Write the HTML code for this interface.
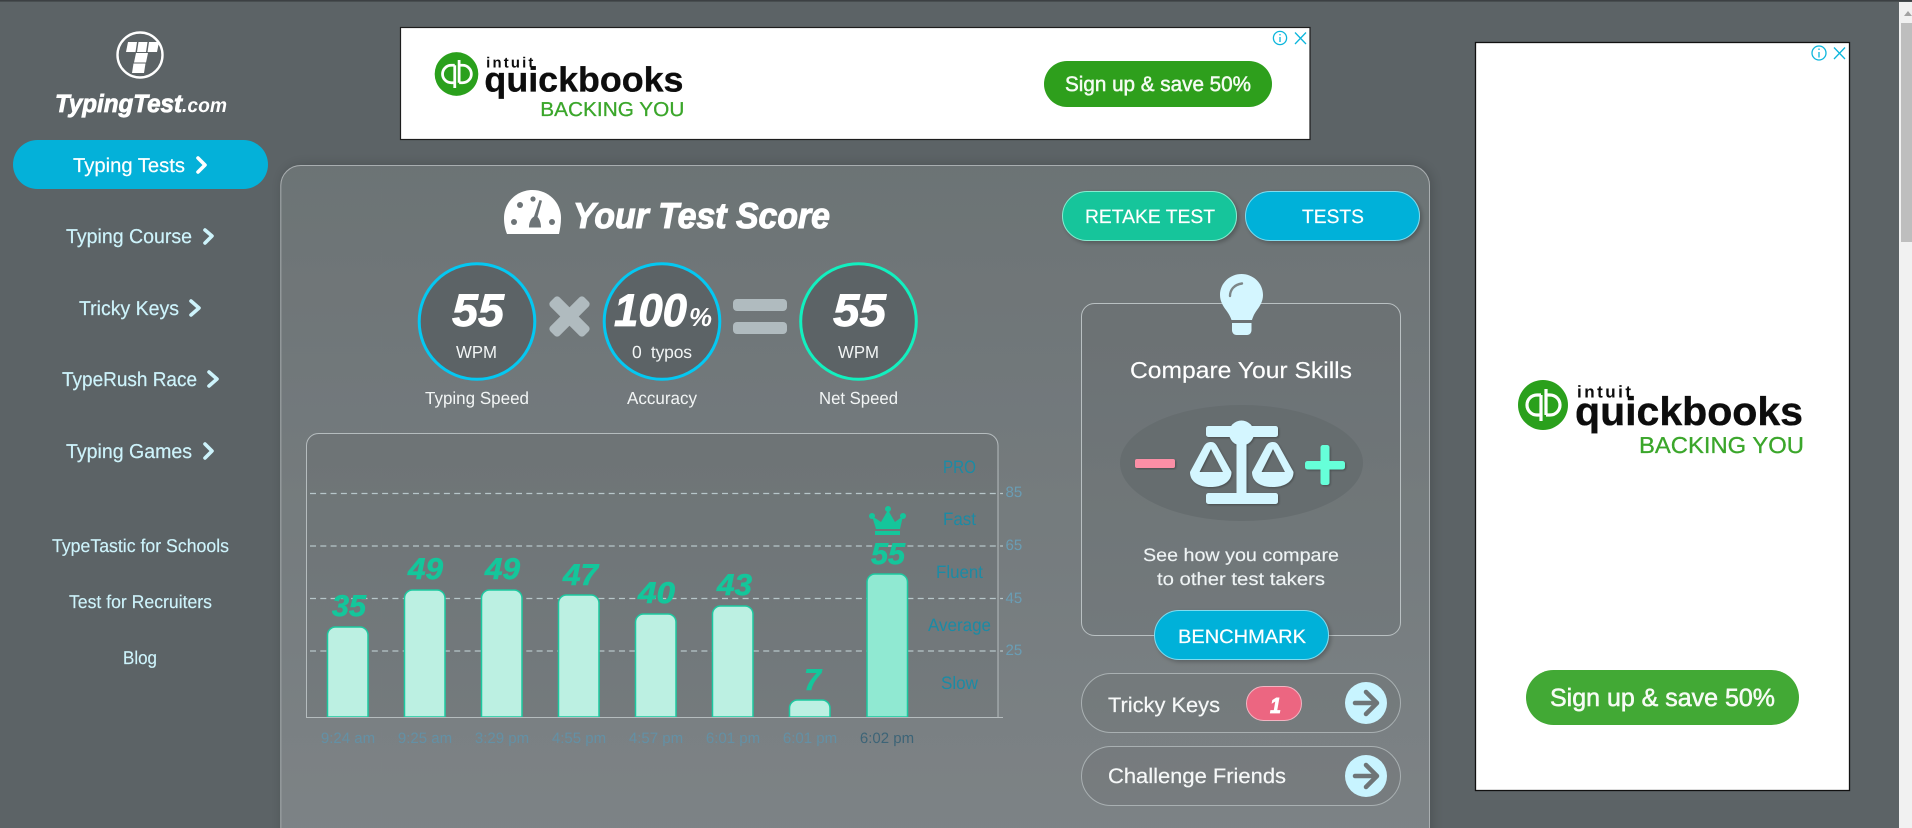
<!DOCTYPE html>
<html lang="en">
<head>
<meta charset="utf-8">
<title>Your Test Score - TypingTest.com</title>
<style>
html,body{margin:0;padding:0;width:1912px;height:828px;overflow:hidden;background:#5c6366}
svg{display:block}
text{font-family:"Liberation Sans",sans-serif;text-rendering:geometricPrecision}
.b{font-weight:700}
.bi{font-weight:700;font-style:italic}
.h{stroke:#fff;stroke-width:.8}
.nav{font-size:20px;fill:#cdf3fb;stroke:#cdf3fb;stroke-width:.2}
.sub{font-size:18.5px;fill:#cdf3fb;stroke:#cdf3fb;stroke-width:.15}
.lbl{font-size:17.5px;fill:#f2f5f5}
.num{font-size:30px;font-weight:700;font-style:italic;fill:#14c69b;stroke:#14c69b;stroke-width:.6}
.time{font-size:15px;fill:#6390a5;text-anchor:middle}
.lvl{font-size:18px;fill:#1b8ba5}
.tick{font-size:15px;fill:#6a9db4}
.btn{font-size:19.5px;fill:#fff;stroke:#fff;stroke-width:.2}
.chev{fill:none;stroke-width:3.6;stroke-linecap:round;stroke-linejoin:round}
</style>
</head>
<body>
<svg width="1912" height="828" viewBox="0 0 1912 828" xmlns="http://www.w3.org/2000/svg">
<defs>
<linearGradient id="pg" x1="0" y1="0" x2="0" y2="1"><stop offset="0" stop-color="#6c7375"/><stop offset="1" stop-color="#7f8588"/></linearGradient>
<filter id="ps" x="-5%" y="-5%" width="110%" height="110%"><feDropShadow dx="2" dy="0" stdDeviation="6" flood-color="#000" flood-opacity=".18"/></filter>
<filter id="bs" x="-15%" y="-25%" width="130%" height="160%"><feDropShadow dx="2" dy="2" stdDeviation="2" flood-color="#000" flood-opacity=".25"/></filter>
<filter id="is" x="-20%" y="-20%" width="140%" height="140%"><feDropShadow dx="1" dy="1" stdDeviation="1" flood-color="#000" flood-opacity=".3"/></filter>
<filter id="soft"><feGaussianBlur stdDeviation=".35"/></filter>
</defs>

<rect width="1912" height="828" fill="#5c6366"/>
<rect width="1912" height="1.6" fill="#3c4043"/>

<!-- Scrollbar -->
<rect x="1899" y="2" width="13" height="826" fill="#f1f1f1"/>
<rect x="1901" y="23" width="11" height="219" fill="#bebebe"/>
<path d="M1908,11 L1912,16 H1904 Z" fill="#a3a3a3"/>

<!-- Logo -->
<circle cx="140" cy="55" r="22.5" fill="none" stroke="#fff" stroke-width="2.4"/>
<g fill="#fff">
<path d="M128,42H137L135.5,52H126Z"/><path d="M138.5,42H147.5L146,52H137Z"/><path d="M149,42H159L157,52H147.5Z"/>
<path d="M136,53H148L146,62.5H134Z"/><path d="M133.5,63.5H145.5L144,73H132Z"/>
</g>
<text x="55" y="112" class="bi h" font-size="25" fill="#fff" textLength="127" lengthAdjust="spacingAndGlyphs">TypingTest</text>
<text x="182" y="112" class="bi" font-size="20" fill="#fff" textLength="45" lengthAdjust="spacingAndGlyphs">.com</text>

<!-- Sidebar -->
<rect x="13" y="140" width="255" height="49" rx="24.5" fill="#04b1d9"/>
<text x="73" y="172" class="nav" style="fill:#fff;stroke:#fff" textLength="112" lengthAdjust="spacingAndGlyphs">Typing Tests</text>
<path class="chev" stroke="#fff" d="M198,158 L205,165 L198,172"/>
<text x="66" y="243" class="nav" textLength="126" lengthAdjust="spacingAndGlyphs">Typing Course</text>
<path class="chev" stroke="#cdf3fb" d="M205,230 L212,236 L205,243"/>
<text x="79" y="315" class="nav" textLength="100" lengthAdjust="spacingAndGlyphs">Tricky Keys</text>
<path class="chev" stroke="#cdf3fb" d="M191,301 L199,308 L191,315"/>
<text x="62" y="386" class="nav" textLength="135" lengthAdjust="spacingAndGlyphs">TypeRush Race</text>
<path class="chev" stroke="#cdf3fb" d="M209,372 L217,379 L209,386"/>
<text x="66" y="458" class="nav" textLength="126" lengthAdjust="spacingAndGlyphs">Typing Games</text>
<path class="chev" stroke="#cdf3fb" d="M205,444 L212,451 L205,458"/>
<text x="52" y="552" class="sub" textLength="177" lengthAdjust="spacingAndGlyphs">TypeTastic for Schools</text>
<text x="69" y="608" class="sub" textLength="143" lengthAdjust="spacingAndGlyphs">Test for Recruiters</text>
<text x="123" y="664" class="sub" textLength="34" lengthAdjust="spacingAndGlyphs">Blog</text>

<!-- Top ad -->
<rect x="400.5" y="27.5" width="909.5" height="112" fill="#fff" stroke="#1d1d1d" stroke-width="1.2"/>
<g filter="url(#soft)">
<g transform="translate(456.5,74) scale(.873) translate(-1543,-405)">
<circle cx="1543" cy="405" r="25" fill="#2ca01c"/>
<g fill="none" stroke="#fff" stroke-width="3.2"><path d="M1541,395H1537a10,10 0 0 0 0,20H1541M1541,395V421"/><path d="M1546,415H1550a10,10 0 0 0 0,-20H1546M1546,415V389"/></g>
<text x="1577" y="397.5" class="b" font-size="17" fill="#111" textLength="54" lengthAdjust="spacing">intuit</text>
<text x="1575" y="425" class="b" font-size="40" fill="#0b0b0b" stroke="#0b0b0b" stroke-width=".4" textLength="228" lengthAdjust="spacingAndGlyphs">quickbooks</text>
<text x="1639" y="453" font-size="23" fill="#3aa62b" textLength="165" lengthAdjust="spacingAndGlyphs" stroke="#3aa62b" stroke-width=".3">BACKING YOU</text>
</g>
<rect x="1044" y="61" width="228" height="46" rx="23" fill="#2e9f1c"/>
<text x="1065" y="91" font-size="21" fill="#f4fbf2" stroke="#f4fbf2" stroke-width=".5" textLength="186" lengthAdjust="spacingAndGlyphs">Sign up &amp; save 50%</text>
</g>
<g fill="none" stroke="#0cb6dc" stroke-width="1.3"><circle cx="1280" cy="38" r="6.6"/><path d="M1280,37V42M1280,34V35.4"/><path d="M1295,32.5L1306,44M1306,32.5L1295,44"/></g>

<!-- Right ad -->
<rect x="1475.5" y="42.5" width="374" height="748" fill="#fff" stroke="#111" stroke-width="1.3"/>
<g filter="url(#soft)">
<circle cx="1543" cy="405" r="25" fill="#2ca01c"/>
<g fill="none" stroke="#fff" stroke-width="3.2"><path d="M1541,395H1537a10,10 0 0 0 0,20H1541M1541,395V421"/><path d="M1546,415H1550a10,10 0 0 0 0,-20H1546M1546,415V389"/></g>
<text x="1577" y="397.5" class="b" font-size="17" fill="#111" textLength="54" lengthAdjust="spacing">intuit</text>
<text x="1575" y="425" class="b" font-size="40" fill="#0b0b0b" stroke="#0b0b0b" stroke-width=".4" textLength="228" lengthAdjust="spacingAndGlyphs">quickbooks</text>
<text x="1639" y="453" font-size="23" fill="#3aa62b" textLength="165" lengthAdjust="spacingAndGlyphs" stroke="#3aa62b" stroke-width=".3">BACKING YOU</text>
<rect x="1526" y="670" width="273" height="55" rx="27.5" fill="#43a934"/>
<text x="1550" y="706" font-size="25" fill="#f6fbf4" stroke="#f6fbf4" stroke-width=".55" textLength="225" lengthAdjust="spacingAndGlyphs">Sign up &amp; save 50%</text>
</g>
<g fill="none" stroke="#0cb6dc" stroke-width="1.3"><circle cx="1819" cy="53" r="7"/><path d="M1819,52V57.5M1819,48.5V50"/><path d="M1834,47.5L1845,59M1845,47.5L1834,59"/></g>

<!-- Main panel -->
<rect x="280.8" y="165.5" width="1148.7" height="760" rx="20" fill="url(#pg)" stroke="#a9aeb0" stroke-width="1" filter="url(#ps)"/>

<!-- Title -->
<path d="M507,234C505,229 504,224 504,218C504,202 517,190 532.5,190C548,190 561,202 561,218C561,224 560,229 559,234Z" fill="#fff"/>
<g fill="#6d7477">
<circle cx="533" cy="199" r="2.6"/><circle cx="520" cy="205" r="3"/><circle cx="514" cy="222" r="3"/><circle cx="552" cy="222" r="3"/>
<path d="M539.5,200L542,200.8L537.500,217C540,219 541,224 541,227.500H529C529,223 530.500,218.500 534,216.500Z"/>
</g>
<text x="573" y="228" class="bi h" font-size="36" fill="#fff" style="stroke-width:1.1" textLength="257" lengthAdjust="spacingAndGlyphs">Your Test Score</text>

<!-- Score circles -->
<circle cx="477" cy="321.5" r="57.8" fill="#5c6366" stroke="#04c8f2" stroke-width="3"/>
<circle cx="662" cy="321.5" r="57.8" fill="#5c6366" stroke="#04c8f2" stroke-width="3"/>
<circle cx="858.5" cy="321.5" r="57.8" fill="#5c6366" stroke="#12f0bf" stroke-width="3"/>
<text x="452" y="326" class="bi h" font-size="46" fill="#fff" textLength="52" lengthAdjust="spacingAndGlyphs">55</text>
<text x="456" y="358" class="lbl" textLength="41" lengthAdjust="spacingAndGlyphs">WPM</text>
<text x="614" y="326" class="bi h" font-size="46" fill="#fff" textLength="73" lengthAdjust="spacingAndGlyphs">100</text>
<text x="689" y="326" class="bi" font-size="26" fill="#fff" textLength="23" lengthAdjust="spacingAndGlyphs">%</text>
<text x="632" y="358" class="lbl" textLength="60" lengthAdjust="spacing" xml:space="preserve">0  typos</text>
<text x="833" y="326" class="bi h" font-size="46" fill="#fff" textLength="53" lengthAdjust="spacingAndGlyphs">55</text>
<text x="838" y="358" class="lbl" textLength="41" lengthAdjust="spacingAndGlyphs">WPM</text>
<text x="425" y="404" class="lbl" textLength="104" lengthAdjust="spacingAndGlyphs">Typing Speed</text>
<text x="627" y="404" class="lbl" textLength="70" lengthAdjust="spacingAndGlyphs">Accuracy</text>
<text x="819" y="404" class="lbl" textLength="79" lengthAdjust="spacingAndGlyphs">Net Speed</text>
<g fill="#b0bbbf">
<rect x="545.5" y="310" width="48" height="13" rx="3.5" transform="rotate(45 569.5 316.5)"/>
<rect x="545.5" y="310" width="48" height="13" rx="3.5" transform="rotate(-45 569.5 316.5)"/>
<rect x="733" y="299" width="54" height="12" rx="4"/>
<rect x="733" y="322" width="54" height="12" rx="4"/>
</g>

<!-- Chart -->
<path d="M306.5,717.5V445.5a12,12 0 0 1 12,-12H986a12,12 0 0 1 12,12V717.5Z" fill="#000" fill-opacity=".045"/>
<g stroke="#b7c6c9" stroke-width="1.2" stroke-dasharray="6 4.3" fill="none">
<path d="M310,493.5H1003"/><path d="M310,546H1003"/><path d="M310,598.5H1003"/><path d="M310,651H1003"/>
</g>
<path d="M306.5,717.5V445.5a12,12 0 0 1 12,-12H986a12,12 0 0 1 12,12V717.5" fill="none" stroke="#b5bcbe" stroke-width="1"/>
<g fill="#bcf0e2" stroke="#1cc9a0" stroke-width="1.5">
<path d="M327.5,717V635a8,8 0 0 1 8,-8H360a8,8 0 0 1 8,8V717Z"/>
<path d="M404.5,717V598a8,8 0 0 1 8,-8H437a8,8 0 0 1 8,8V717Z"/>
<path d="M481.5,717V598a8,8 0 0 1 8,-8H514a8,8 0 0 1 8,8V717Z"/>
<path d="M558.5,717V603a8,8 0 0 1 8,-8H591a8,8 0 0 1 8,8V717Z"/>
<path d="M635.5,717V622a8,8 0 0 1 8,-8H668a8,8 0 0 1 8,8V717Z"/>
<path d="M712.5,717V614a8,8 0 0 1 8,-8H745a8,8 0 0 1 8,8V717Z"/>
<path d="M789.5,717V708a8,8 0 0 1 8,-8H822a8,8 0 0 1 8,8V717Z"/>
<path d="M867,717V582a8,8 0 0 1 8,-8H899.5a8,8 0 0 1 8,8V717Z" fill="#90e9d2"/>
</g>
<path d="M306,717.5H1003" stroke="#b5bcbe" stroke-width="1"/>
<text x="332" y="616" class="num" textLength="34" lengthAdjust="spacingAndGlyphs">35</text>
<text x="408" y="579" class="num" textLength="35" lengthAdjust="spacingAndGlyphs">49</text>
<text x="485" y="579" class="num" textLength="35" lengthAdjust="spacingAndGlyphs">49</text>
<text x="563" y="585" class="num" textLength="35" lengthAdjust="spacingAndGlyphs">47</text>
<text x="638" y="603" class="num" textLength="37" lengthAdjust="spacingAndGlyphs">40</text>
<text x="717" y="595" class="num" textLength="35" lengthAdjust="spacingAndGlyphs">43</text>
<text x="804" y="690" class="num" textLength="17" lengthAdjust="spacingAndGlyphs">7</text>
<text x="871" y="564" class="num" textLength="34" lengthAdjust="spacingAndGlyphs">55</text>
<g fill="#14c69b">
<path d="M876,529L872,516L881,522L888,510L895,522L903,516L900,529Z"/>
<circle cx="872" cy="516" r="3"/><circle cx="888" cy="509" r="3"/><circle cx="903" cy="516" r="3"/>
<rect x="875" y="531" width="25" height="4"/>
</g>
<text x="348" y="743" class="time">9:24 am</text>
<text x="425" y="743" class="time">9:25 am</text>
<text x="502" y="743" class="time">3:29 pm</text>
<text x="579" y="743" class="time">4:55 pm</text>
<text x="656" y="743" class="time">4:57 pm</text>
<text x="733" y="743" class="time">6:01 pm</text>
<text x="810" y="743" class="time">6:01 pm</text>
<text x="887" y="743" class="time" style="fill:#3d6477">6:02 pm</text>
<text x="943" y="473" class="lvl" textLength="33" lengthAdjust="spacingAndGlyphs">PRO</text>
<text x="943" y="525" class="lvl" textLength="33" lengthAdjust="spacingAndGlyphs">Fast</text>
<text x="936" y="578" class="lvl" textLength="47" lengthAdjust="spacingAndGlyphs">Fluent</text>
<text x="928" y="631" class="lvl" textLength="63" lengthAdjust="spacingAndGlyphs">Average</text>
<text x="941" y="689" class="lvl" textLength="37" lengthAdjust="spacingAndGlyphs">Slow</text>
<text x="1005.5" y="497" class="tick">85</text>
<text x="1005.5" y="550" class="tick">65</text>
<text x="1005.5" y="603" class="tick">45</text>
<text x="1005.5" y="655" class="tick">25</text>

<!-- Buttons -->
<rect x="1062.5" y="191.5" width="174" height="49" rx="24.5" fill="#16c59b" stroke="#86ecd0" filter="url(#bs)"/>
<text x="1085" y="223" class="btn" textLength="130" lengthAdjust="spacingAndGlyphs">RETAKE TEST</text>
<rect x="1245.5" y="191.5" width="174" height="49" rx="24.5" fill="#04b1d9" stroke="#7fdcf0" filter="url(#bs)"/>
<text x="1302" y="223" class="btn" textLength="62" lengthAdjust="spacingAndGlyphs">TESTS</text>

<!-- Compare box -->
<rect x="1081.5" y="303.5" width="319" height="332" rx="13" fill="#000" fill-opacity=".035" stroke="#b9c0c2" stroke-width="1"/>
<path d="M1241.5,274C1253,274 1263,283 1263,295C1263,301 1260,306 1257,310C1254,314 1253,317 1252,320H1231.5C1230.5,317 1229,314 1226,310C1223,306 1220,301 1220,295C1220,283 1230,274 1241.5,274Z" fill="#d4f6ff"/>
<path d="M1232,323H1251.5V330C1251.5,333 1249.5,335 1247,335H1236.5C1234,335 1232,333 1232,330Z" fill="#d4f6ff"/>
<path d="M1230,296C1230,290 1234,284.5 1242,283.5" fill="none" stroke="#7d8688" stroke-width="2.4" stroke-linecap="round"/>
<text x="1130" y="378" font-size="23" fill="#fff" stroke="#fff" stroke-width=".15" textLength="222" lengthAdjust="spacingAndGlyphs">Compare Your Skills</text>
<ellipse cx="1241.5" cy="463" rx="121.5" ry="58" fill="#666d6f"/>
<rect x="1135" y="459" width="40" height="9" rx="2" fill="#fb8fa6" filter="url(#is)"/>
<g fill="#66ffd9" filter="url(#is)">
<rect x="1320.5" y="445" width="9" height="40" rx="2.5"/>
<rect x="1305" y="461" width="40" height="8.500" rx="2.5"/>
</g>
<g fill="#d4f6ff" filter="url(#is)">
<rect x="1206" y="426" width="72" height="11" rx="2.5"/>
<circle cx="1241.5" cy="433" r="12.5"/>
<rect x="1236.5" y="438" width="10" height="60"/>
<rect x="1206" y="493" width="72" height="11" rx="2.5"/>
<path fill-rule="evenodd" d="M1211,442C1214,442 1215.5,443.5 1217,446L1231.5,472C1231.5,482 1222,487 1210.5,487C1199,487 1190,482 1190,472L1204,446C1206,443 1208,442 1211,442ZM1211,449L1199.5,472H1223Z"/>
<path fill-rule="evenodd" transform="translate(62,0)" d="M1211,442C1214,442 1215.5,443.5 1217,446L1231.5,472C1231.5,482 1222,487 1210.5,487C1199,487 1190,482 1190,472L1204,446C1206,443 1208,442 1211,442ZM1211,449L1199.5,472H1223Z"/>
</g>
<text x="1143" y="561" font-size="18" fill="#eef3f4" stroke="#eef3f4" stroke-width=".15" textLength="196" lengthAdjust="spacingAndGlyphs">See how you compare</text>
<text x="1157" y="585" font-size="18" fill="#eef3f4" stroke="#eef3f4" stroke-width=".15" textLength="168" lengthAdjust="spacingAndGlyphs">to other test takers</text>
<rect x="1154.5" y="610.5" width="174" height="49" rx="24.5" fill="#04b1d9" stroke="#7fdcf0" filter="url(#bs)"/>
<text x="1178" y="643" class="btn" textLength="128" lengthAdjust="spacingAndGlyphs">BENCHMARK</text>

<!-- Tricky keys -->
<rect x="1081.5" y="673.5" width="319" height="59" rx="29.5" fill="#000" fill-opacity=".04" stroke="#a9b0b2"/>
<text x="1108" y="712" font-size="21" fill="#f6f8f8" stroke="#f6f8f8" stroke-width=".2" textLength="112" lengthAdjust="spacingAndGlyphs">Tricky Keys</text>
<rect x="1246.5" y="686.5" width="55" height="34" rx="17" fill="#ec6681" stroke="#f2b4c2"/>
<text x="1270" y="713" class="bi h" font-size="22" fill="#fff" textLength="11" lengthAdjust="spacingAndGlyphs">1</text>
<circle cx="1366" cy="703" r="21" fill="#c8f4ff"/>
<path d="M1355,703H1376M1366,692L1377,703L1366,714" fill="none" stroke="#6e7577" stroke-width="4.5" stroke-linecap="round" stroke-linejoin="round"/>

<!-- Challenge -->
<rect x="1081.5" y="746.5" width="319" height="59" rx="29.5" fill="#000" fill-opacity=".04" stroke="#a9b0b2"/>
<text x="1108" y="783" font-size="21" fill="#f6f8f8" stroke="#f6f8f8" stroke-width=".2" textLength="178" lengthAdjust="spacingAndGlyphs">Challenge Friends</text>
<circle cx="1366" cy="776" r="21" fill="#c8f4ff"/>
<path d="M1355,776H1376M1366,765L1377,776L1366,787" fill="none" stroke="#6e7577" stroke-width="4.5" stroke-linecap="round" stroke-linejoin="round"/>
</svg>
</body>
</html>
